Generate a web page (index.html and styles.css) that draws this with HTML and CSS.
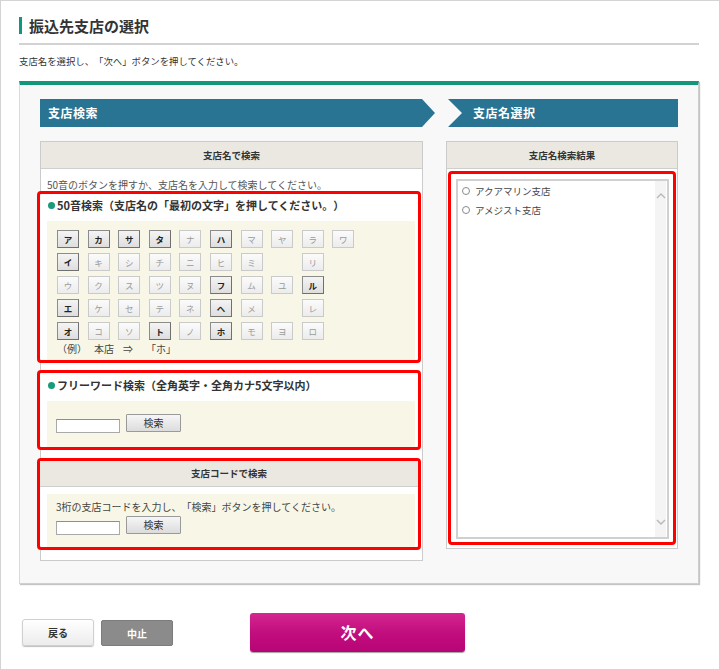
FILE: index.html
```html
<!DOCTYPE html>
<html lang="ja">
<head>
<meta charset="utf-8">
<title>振込先支店の選択</title>
<link rel="stylesheet" href="styles.css">
</head>
<body>
<div class="page">
  <div class="head">
    <h1 class="title">振込先支店の選択</h1>
  </div>
  <p class="lead">支店名を選択し、「次へ」ボタンを押してください。</p>

  <div class="panel">
    <div class="col col-left">
      <div class="step step-first">支店検索</div>
      <div class="box box-left">
        <div class="box-head">支店名で検索</div>
        <p class="note">50音のボタンを押すか、支店名を入力して検索してください。</p>

        <div class="hl hl-kana">
          <div class="sub-head"><span class="dot"></span>50音検索（支店名の「最初の文字」を押してください。）</div>
          <div class="beige kana-area">
            <div class="kana-grid">
              <span class="k on">ア</span><span class="k on">カ</span><span class="k on">サ</span><span class="k on">タ</span><span class="k">ナ</span><span class="k on">ハ</span><span class="k">マ</span><span class="k">ヤ</span><span class="k">ラ</span><span class="k">ワ</span>
              <span class="k on">イ</span><span class="k">キ</span><span class="k">シ</span><span class="k">チ</span><span class="k">ニ</span><span class="k">ヒ</span><span class="k">ミ</span><span class="k-empty"></span><span class="k">リ</span><span class="k-empty"></span>
              <span class="k">ウ</span><span class="k">ク</span><span class="k">ス</span><span class="k">ツ</span><span class="k">ヌ</span><span class="k on">フ</span><span class="k">ム</span><span class="k">ユ</span><span class="k on">ル</span><span class="k-empty"></span>
              <span class="k on">エ</span><span class="k">ケ</span><span class="k">セ</span><span class="k">テ</span><span class="k">ネ</span><span class="k on">ヘ</span><span class="k">メ</span><span class="k-empty"></span><span class="k">レ</span><span class="k-empty"></span>
              <span class="k on">オ</span><span class="k">コ</span><span class="k">ソ</span><span class="k on">ト</span><span class="k">ノ</span><span class="k on">ホ</span><span class="k">モ</span><span class="k">ヨ</span><span class="k">ロ</span><span class="k-empty"></span>
            </div>
            <div class="example"><span class="ex1">（例）</span><span class="ex2">本店</span><span class="ex3">⇒</span><span class="ex4">「ホ」</span></div>
          </div>
        </div>

        <div class="hl hl-free">
          <div class="sub-head"><span class="dot"></span>フリーワード検索（全角英字・全角カナ5文字以内）</div>
          <div class="beige free-area">
            <div class="search-row">
              <span class="field"></span><span class="btn-search">検索</span>
            </div>
          </div>
        </div>

        <div class="hl hl-code">
          <div class="code-head">支店コードで検索</div>
          <div class="beige code-area">
            <p class="code-note">3桁の支店コードを入力し、「検索」ボタンを押してください。</p>
            <div class="search-row">
              <span class="field"></span><span class="btn-search">検索</span>
            </div>
          </div>
        </div>
      </div>
    </div>

    <div class="col col-right">
      <div class="step step-second">支店名選択</div>
      <div class="box box-right">
        <div class="box-head">支店名検索結果</div>
        <div class="hl hl-result">
          <div class="listbox">
            <ul class="items">
              <li class="item"><span class="radio"></span>アクアマリン支店</li>
              <li class="item"><span class="radio"></span>アメジスト支店</li>
            </ul>
            <div class="scrollbar">
              <svg class="chev" width="10" height="6" viewBox="0 0 10 6"><path d="M1 5 L5 1 L9 5" fill="none" stroke="#b8b8b8" stroke-width="1.4"/></svg>
              <svg class="chev" width="10" height="6" viewBox="0 0 10 6"><path d="M1 1 L5 5 L9 1" fill="none" stroke="#b8b8b8" stroke-width="1.4"/></svg>
            </div>
          </div>
        </div>
      </div>
    </div>
  </div>

  <div class="actions">
    <span class="btn btn-back">戻る</span>
    <span class="btn btn-stop">中止</span>
    <span class="btn btn-next">次へ</span>
  </div>
</div>
</body>
</html>
```

FILE: styles.css
```css
* { box-sizing: border-box; }
html, body { margin: 0; padding: 0; background: #fff; }
body {
  font-family: "Noto Sans CJK JP", "DejaVu Sans", sans-serif;
  color: #333;
  text-spacing-trim: space-all;
}
.page {
  width: 720px;
  height: 670px;
  border: 1px solid #d4d4d4;
  padding: 0 20px 0 18px;
  overflow: hidden;
}
.head {
  padding-top: 16px;
  padding-bottom: 9px;
  border-bottom: 2px solid #d2d2d2;
}
.title {
  margin: 0;
  height: 17px;
  line-height: 17px;
  font-size: 15px;
  font-weight: bold;
  color: #333;
  border-left: 3px solid #12977a;
  padding-left: 7px;
}
.lead {
  margin: 9px 0 0;
  font-size: 9.4px;
  line-height: 14px;
  color: #333;
}
.panel {
  margin-top: 13px;
  height: 503px;
  background: #f8f8f8;
  border-top: 4px solid #12977a;
  border-left: 1px solid #dadada;
  border-right: 1px solid #cfcfcf;
  border-bottom: 1px solid #cfcfcf;
  box-shadow: 1px 1px 1px #c4c4c4;
  padding: 14px 20px 0 20px;
  display: flex;
  gap: 11px;
  align-items: flex-start;
}
.col-left { width: 395px; }
.col-right { width: 232px; }

.step {
  height: 28px;
  line-height: 28px;
  background: #2a7493;
  color: #fff;
  font-size: 12px;
  font-weight: bold;
  letter-spacing: 0.5px;
}
.step-first {
  padding-left: 8px;
  clip-path: polygon(0 0, calc(100% - 13px) 0, 100% 50%, calc(100% - 13px) 100%, 0 100%);
}
.step-second {
  margin-left: 2px;
  padding-left: 25px;
  clip-path: polygon(0 0, 100% 0, 100% 100%, 0 100%, 14px 50%);
}

.box {
  margin-top: 14px;
  background: #fff;
  border: 1px solid #cbcbcb;
}
.box-left { width: 383px; padding-bottom: 10px; }
.box-right { padding-bottom: 3px; }
.box-head {
  height: 27px;
  line-height: 26px;
  background: #ebe8e2;
  border-bottom: 1px solid #cfcfcf;
  text-align: center;
  font-size: 9.5px;
  font-weight: bold;
  color: #333;
}
.note {
  margin: 9px 0 0;
  padding-left: 6px;
  font-size: 10px;
  line-height: 13px;
  color: #555;
}

.hl {
  border: 3px solid #f00;
  border-radius: 4px;
  margin: 0 1px 0 -4px;
  background: #fff;
}
.hl-kana { margin-top: 0; }
.hl-free { margin-top: 7px; }
.hl-code { margin-top: 8px; }

.sub-head {
  display: flex;
  align-items: center;
  padding: 4px 0 9px 8px;
  line-height: 14px;
  font-size: 11px;
  font-weight: bold;
  color: #333;
  white-space: nowrap;
}
.hl-free .sub-head { padding-top: 5px; }
.dot {
  width: 7px;
  height: 7px;
  border-radius: 50%;
  background: #189a7b;
  margin-right: 2px;
  flex: none;
}
.beige {
  background: #f8f7e7;
  margin: 0 3px 0 7px;
}
.kana-area { padding: 9px 0 4px 10px; }
.kana-grid {
  display: grid;
  grid-template-columns: repeat(10, 22px);
  column-gap: 8.6px;
  row-gap: 5px;
}
.k {
  height: 18px;
  line-height: 16px;
  text-align: center;
  font-size: 8.5px;
  color: #9a9a9a;
  border: 1px solid #cacaca;
  background: linear-gradient(#fbfbfb, #ececec);
}
.k.on {
  color: #222;
  font-weight: bold;
  border-color: #8c8c8c #707070 #707070 #8c8c8c;
  background: linear-gradient(#f4f4f4, #dedede);
}
.example {
  display: flex;
  margin-top: 2px;
  line-height: 14px;
  font-size: 10px;
  color: #444;
}
.ex1 { width: 37px; }
.ex2 { width: 29px; }
.ex3 { width: 23px; }

.free-area { padding: 13px 0 14px 9px; }
.search-row {
  display: flex;
  align-items: flex-start;
}
.field {
  display: block;
  width: 64px;
  height: 14px;
  margin-top: 5px;
  background: #fff;
  border: 1px solid #a9a9a9;
  border-top-color: #8e8e8e;
}
.btn-search {
  display: block;
  width: 55px;
  height: 18px;
  margin-left: 6px;
  line-height: 16px;
  text-align: center;
  font-size: 10px;
  color: #333;
  border: 1px solid #9a9a9a;
  border-radius: 1px;
  background: linear-gradient(#f6f6f6, #dcdcdc);
}
.code-head {
  height: 26px;
  line-height: 25px;
  background: #ebe8e2;
  border-bottom: 1px solid #cfcfcf;
  text-align: center;
  font-size: 9.5px;
  font-weight: bold;
  color: #333;
}
.code-area {
  margin-top: 7px;
  padding: 6px 0 12px 9px;
}
.code-note {
  margin: 0 0 2px;
  font-size: 10px;
  line-height: 14px;
  color: #444;
}

.hl-result {
  margin: 2px 1px 0 1px;
  padding: 5px 4px 3px 5px;
}
.listbox {
  height: 360px;
  border: 2px solid #d0d0d0;
  display: flex;
  justify-content: space-between;
  background: #fff;
}
.items {
  list-style: none;
  margin: 0;
  padding: 0 0 0 4px;
}
.item {
  display: flex;
  align-items: center;
  height: 19px;
  font-size: 9.5px;
  color: #444;
}
.radio {
  width: 8px;
  height: 8px;
  border: 1px solid #8a8a8a;
  border-radius: 50%;
  margin-right: 5px;
  background: #fff;
}
.scrollbar {
  width: 11px;
  margin-right: 1px;
  background: #f4f4f4;
  display: flex;
  flex-direction: column;
  justify-content: space-between;
  align-items: center;
  padding: 12px 0 12px;
}
.chev { display: block; }

.actions {
  margin-top: 29px;
  height: 39px;
  display: flex;
  align-items: center;
}
.btn {
  display: block;
  text-align: center;
  font-weight: bold;
}
.btn-back {
  margin-left: 3px;
  width: 72px;
  height: 27px;
  line-height: 25px;
  font-size: 10px;
  color: #333;
  border: 1px solid #d0d0d0;
  border-radius: 3px;
  background: linear-gradient(#ffffff, #ececec);
  box-shadow: 0 1px 1px #bdbdbd;
}
.btn-stop {
  margin-left: 7px;
  width: 72px;
  height: 26px;
  line-height: 25px;
  font-size: 10px;
  color: #ffffff;
  border: 1px solid #7c7c7c;
  border-radius: 2px;
  background: #8b8b8b;
}
.btn-next {
  margin-left: 77px;
  width: 215px;
  height: 39px;
  line-height: 38px;
  font-size: 16px;
  color: #fff;
  border-radius: 3px;
  background: linear-gradient(#d4268f, #c00c7c 55%, #b80576);
  box-shadow: 0 1px 1px #a0a0a0;
  letter-spacing: 1px;
}
```
